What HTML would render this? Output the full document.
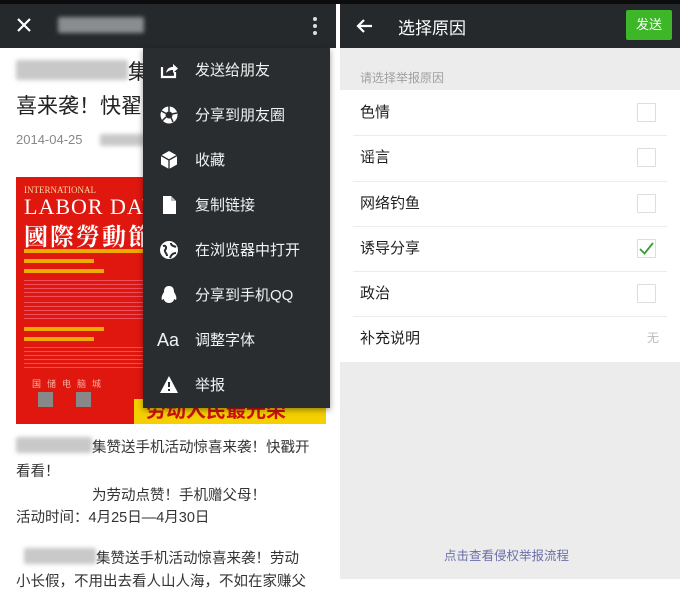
<!DOCTYPE html>
<html><head><meta charset="utf-8">
<style>
*{margin:0;padding:0;box-sizing:border-box}
body{width:680px;height:579px;overflow:hidden;background:#fff;position:relative;font-family:"Liberation Sans","Noto Sans CJK SC",sans-serif}
.abs{position:absolute}
.topbar{left:0;top:0;width:680px;height:4px;background:#0c0c0c}
.hdrL{left:0;top:4px;width:336px;height:44px;background:#26292b}
.hdrR{left:340px;top:4px;width:340px;height:44px;background:#26292b}
.blur{background:#c8c8c8;filter:blur(2px);border-radius:2px}
.menu{left:143px;top:48px;width:187px;height:360px;background:#2a2d30;box-shadow:0 2px 6px rgba(0,0,0,.4)}
.mi{position:absolute;left:0;width:187px;height:45px;color:#f2f2f2;font-size:15px;line-height:45px}
.mi span{position:absolute;left:52px}
.mi svg{position:absolute;left:16px;top:12px}
.row{position:absolute;left:340px;width:340px;height:45px;font-size:15px;color:#222;line-height:45px}
.row span{position:absolute;left:20px}
.row .cb{position:absolute;left:297px;top:13px;width:19px;height:19px;border:1px solid #ddd;border-radius:1px}
.sep{position:absolute;left:353px;width:314px;height:1px;background:#ececec}
.p{position:absolute;left:16px;font-size:14.5px;color:#333}
</style></head><body>
<div class="abs topbar"></div>
<div class="abs hdrL"></div>
<svg class="abs" style="left:16px;top:17px" width="16" height="16"><path d="M2 2L14 14M14 2L2 14" stroke="#fff" stroke-width="2.2"/></svg>
<div class="abs blur" style="left:58px;top:17px;width:86px;height:16px;background:#8a8d90"></div>
<div class="abs" style="left:313px;top:17px;width:4px;height:4px;background:#ddd;border-radius:2px"></div>
<div class="abs" style="left:313px;top:24px;width:4px;height:4px;background:#ddd;border-radius:2px"></div>
<div class="abs" style="left:313px;top:31px;width:4px;height:4px;background:#ddd;border-radius:2px"></div>

<div class="abs blur" style="left:16px;top:60px;width:112px;height:20px"></div>
<div class="abs" style="left:128px;top:56px;font-size:21px;color:#222">集</div>
<div class="abs" style="left:16px;top:90px;font-size:21px;color:#222">喜来袭！快翟</div>
<div class="abs" style="left:16px;top:132px;font-size:13px;color:#888">2014-04-25</div>
<div class="abs blur" style="left:100px;top:134px;width:45px;height:12px"></div>

<div class="abs" style="left:16px;top:177px;width:310px;height:247px;background:#e0170f;overflow:hidden">
 <div class="abs" style="left:8px;top:8px;color:#f7d9a0;font-family:'Liberation Serif',serif;font-size:9px">INTERNATIONAL</div>
 <div class="abs" style="left:8px;top:17px;color:#fff;font-family:'Liberation Serif',serif;font-size:22px;letter-spacing:1px">LABOR DAY</div>
 <div class="abs" style="left:8px;top:40px;color:#fff;font-family:'Noto Serif CJK SC',serif;font-size:24px;font-weight:bold;letter-spacing:2px">國際勞動節</div>
 <div class="abs" style="left:8px;top:72px;width:120px;height:4px;background:#f5d000;opacity:.8"></div>
 <div class="abs" style="left:8px;top:82px;width:70px;height:4px;background:#f5d000;opacity:.8"></div>
 <div class="abs" style="left:8px;top:92px;width:80px;height:4px;background:#f5d000;opacity:.8"></div>
 <div class="abs" style="left:8px;top:103px;width:120px;height:20px;background:repeating-linear-gradient(#f8a 0 1px,transparent 1px 4px);opacity:.5"></div>
 <div class="abs" style="left:8px;top:125px;width:120px;height:20px;background:repeating-linear-gradient(#f8a 0 1px,transparent 1px 4px);opacity:.5"></div>
 <div class="abs" style="left:8px;top:150px;width:80px;height:4px;background:#f5d000;opacity:.8"></div>
 <div class="abs" style="left:8px;top:160px;width:70px;height:4px;background:#f5d000;opacity:.8"></div>
 <div class="abs" style="left:8px;top:170px;width:120px;height:24px;background:repeating-linear-gradient(#f8a 0 1px,transparent 1px 4px);opacity:.5"></div>
 <div class="abs" style="left:16px;top:200px;color:#f3b0a0;font-size:9px;letter-spacing:6px">国储电脑城</div>
 <div class="abs" style="left:22px;top:215px;width:15px;height:15px;background:#888"></div>
 <div class="abs" style="left:60px;top:215px;width:15px;height:15px;background:#888"></div>
 <div class="abs" style="left:118px;top:222px;width:192px;height:25px;background:#f5d000"></div>
 <div class="abs" style="left:130px;top:222px;color:#d01010;font-size:20px;font-weight:bold;line-height:25px">劳动人民最光荣</div>
</div>

<div class="abs menu">
 <div class="mi" style="top:0"><svg width="20" height="20"><path d="M3 7V17H16V12" fill="none" stroke="#fff" stroke-width="2.2"/><path d="M7 13C8 8 11 7 14 7V4L19 8.5L14 13V10C11 10 9 11 7 13Z" fill="#fff"/></svg><span>发送给朋友</span></div>
 <div class="mi" style="top:45px"><svg width="20" height="20"><circle cx="10" cy="10" r="8.5" fill="#fff"/><circle cx="10" cy="10" r="3.5" fill="#2a2d30"/><path d="M10 1.5L10 6.5M18 8L13 9M14 17L12 12.5M3 16L7 12M2.5 6L7 8.5" stroke="#2a2d30" stroke-width="1.5"/></svg><span>分享到朋友圈</span></div>
 <div class="mi" style="top:90px"><svg width="20" height="20"><path d="M10 1L18 5.5V14.5L10 19L2 14.5V5.5Z" fill="#fff"/><path d="M2 5.5L10 10L18 5.5M10 10V19" stroke="#2a2d30" stroke-width="1.3" fill="none"/></svg><span>收藏</span></div>
 <div class="mi" style="top:135px"><svg width="20" height="20"><path d="M4 1H12L17 6V19H4Z" fill="#fff"/><path d="M12 1V6H17" fill="#bbb"/></svg><span>复制链接</span></div>
 <div class="mi" style="top:180px"><svg width="20" height="20"><circle cx="10" cy="10" r="9" fill="#fff"/><path d="M4 6C7 5 8 8 6 10C5 12 8 13 8 16M12 3C12 6 15 6 17 7M11 18C12 15 14 13 17 13" stroke="#2a2d30" stroke-width="2" fill="none"/></svg><span>在浏览器中打开</span></div>
 <div class="mi" style="top:225px"><svg width="20" height="20"><path d="M10 1C6 1 5 4 5 7C3 10 2 13 3 15L5 14C5 16 7 18 10 18C13 18 15 16 15 14L17 15C18 13 17 10 15 7C15 4 14 1 10 1Z" fill="#fff"/></svg><span>分享到手机QQ</span></div>
 <div class="mi" style="top:270px"><span style="left:14px;font-size:18px">Aa</span><span>调整字体</span></div>
 <div class="mi" style="top:315px"><svg width="20" height="20"><path d="M10 1L19 18H1Z" fill="#fff"/><path d="M10 7V12M10 14V16" stroke="#2a2d30" stroke-width="2"/></svg><span>举报</span></div>
</div>

<div class="abs blur" style="left:16px;top:437px;width:76px;height:16px"></div>
<div class="p" style="top:436px;left:92px">集赞送手机活动惊喜来袭！快戳开</div>
<div class="p" style="top:460px">看看！</div>
<div class="p" style="top:484px;left:92px">为劳动点赞！手机赠父母！</div>
<div class="p" style="top:506px">活动时间：4月25日—4月30日</div>
<div class="abs blur" style="left:24px;top:548px;width:72px;height:16px"></div>
<div class="p" style="top:547px;left:96px">集赞送手机活动惊喜来袭！劳动</div>
<div class="p" style="top:570px">小长假，不用出去看人山人海，不如在家赚父</div>

<div class="abs hdrR"></div>
<svg class="abs" style="left:355px;top:18px" width="18" height="16"><path d="M17 8H3M9 2L3 8L9 14" stroke="#fff" stroke-width="2.2" fill="none"/></svg>
<div class="abs" style="left:398px;top:14px;color:#fff;font-size:17px">选择原因</div>
<div class="abs" style="left:626px;top:10px;width:46px;height:30px;background:#3db627;border-radius:2px;color:#fff;font-size:13px;line-height:30px;text-align:center">发送</div>
<div class="abs" style="left:340px;top:48px;width:340px;height:42px;background:#ececec"></div>
<div class="abs" style="left:360px;top:69px;font-size:12px;color:#a0a0a0">请选择举报原因</div>
<div class="row" style="top:90px"><span>色情</span><div class="cb"></div></div>
<div class="sep" style="top:135px"></div>
<div class="row" style="top:135px"><span>谣言</span><div class="cb"></div></div>
<div class="sep" style="top:181px"></div>
<div class="row" style="top:181px"><span>网络钓鱼</span><div class="cb"></div></div>
<div class="sep" style="top:226px"></div>
<div class="row" style="top:226px"><span>诱导分享</span><div class="cb"><svg width="19" height="19" style="position:absolute;left:-1px;top:-1px"><path d="M3 10L7.5 14.5L16 4" stroke="#3a9e35" stroke-width="1.8" fill="none"/></svg></div></div>
<div class="sep" style="top:271px"></div>
<div class="row" style="top:271px"><span>政治</span><div class="cb"></div></div>
<div class="sep" style="top:316px"></div>
<div class="row" style="top:316px"><span>补充说明</span><span style="left:307px;font-size:12px;color:#bbb">无</span></div>
<div class="abs" style="left:340px;top:362px;width:340px;height:217px;background:#ececec"></div>
<div class="abs" style="left:444px;top:545px;font-size:12.5px;color:#6a6fa8">点击查看侵权举报流程</div>
</body></html>
